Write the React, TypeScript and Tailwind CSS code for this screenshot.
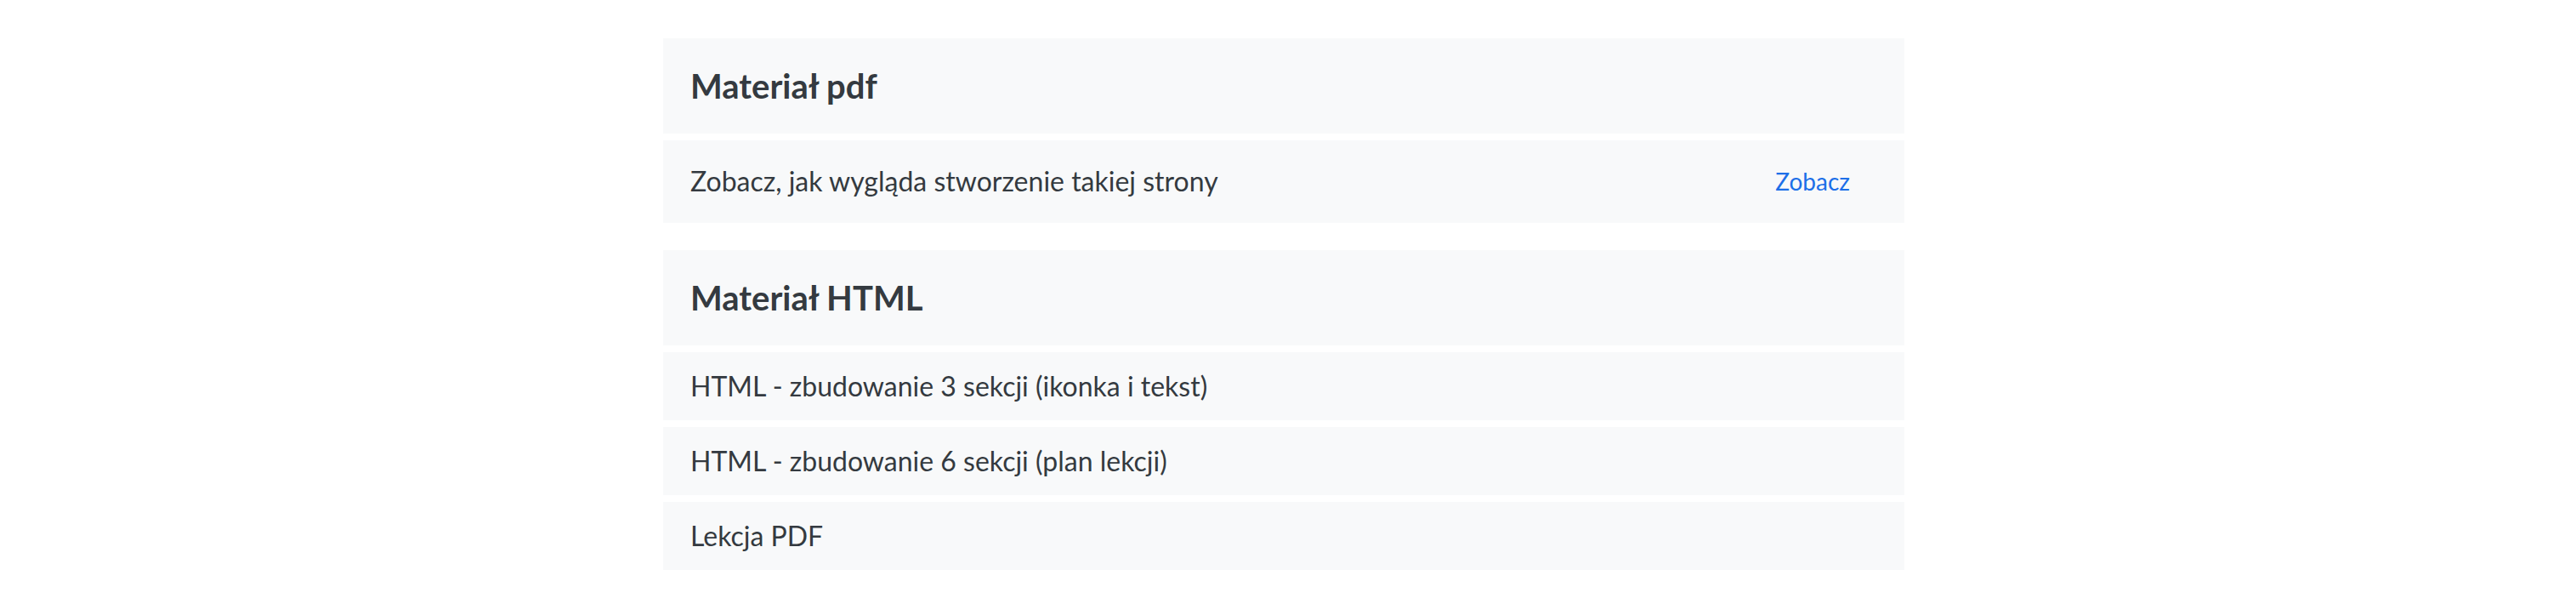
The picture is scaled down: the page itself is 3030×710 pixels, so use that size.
import React from 'react';

interface Lesson {
  title: string;
  link?: string;
}

interface Section {
  heading: string;
  lessons: Lesson[];
}

const SECTIONS: Section[] = [
  {
    heading: 'Materiał pdf',
    lessons: [{ title: 'Zobacz, jak wygląda stworzenie takiej strony', link: 'Zobacz' }],
  },
  {
    heading: 'Materiał HTML',
    lessons: [
      { title: 'HTML - zbudowanie 3 sekcji (ikonka i tekst)' },
      { title: 'HTML - zbudowanie 6 sekcji (plan lekcji)' },
      { title: 'Lekcja PDF' },
    ],
  },
];

export default function App() {
  return (
    <div className="min-h-screen bg-white font-['Lato','Liberation_Sans',sans-serif] text-[#343a40]">
      <div className="flex justify-center pr-[10px] pt-[45px]">
        <div className="w-[1460px] flex flex-col gap-8">
          {SECTIONS.map((section) => (
            <div key={section.heading} className="flex flex-col gap-2">
              {/* Section header */}
              <div className="bg-[#f8f9fa] px-8 py-8">
                <h2 className="text-[40px] leading-[48px] font-bold">{section.heading}</h2>
              </div>

              {section.lessons.map((lesson) => (
                <div
                  key={lesson.title}
                  className={`bg-[#f8f9fa] px-8 flex items-center justify-between ${
                    lesson.link ? 'h-[97px]' : 'h-[80px]'
                  }`}
                >
                  <span className="text-[32px] leading-[1.2]">{lesson.title}</span>
                  {lesson.link && (
                    <a href="#" className="px-8 text-[28px] leading-[1.2] text-[#1d6fe8]">
                      {lesson.link}
                    </a>
                  )}
                </div>
              ))}
            </div>
          ))}
        </div>
      </div>
    </div>
  );
}
